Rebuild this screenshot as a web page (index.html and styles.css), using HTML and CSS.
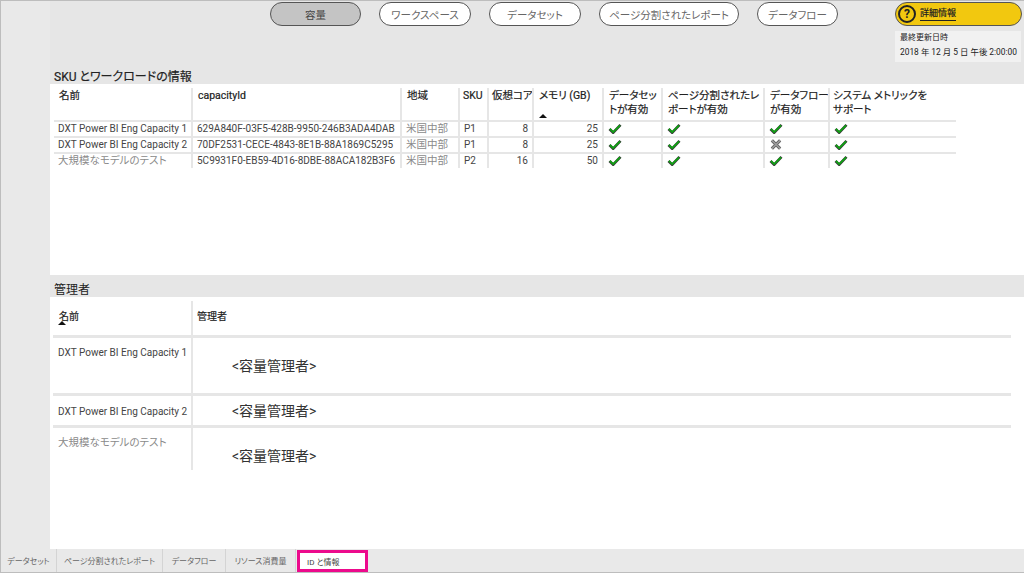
FILE: index.html
```html
<!DOCTYPE html>
<html lang="ja">
<head>
    <meta charset="UTF-8">
    <title>容量</title>
    <link rel="stylesheet" href="styles.css">
</head>
<body>
    <svg class="defs" width="0" height="0">
        <symbol id="check" viewBox="0 0 14 12">
            <path d="M1 6.5 L5 10.5 L13 2" fill="none" stroke="#3a3f3a" stroke-width="3"/>
            <path d="M1.5 6.5 L5 10 L12.5 2.5" fill="none" stroke="#0ea512" stroke-width="1.8"/>
        </symbol>
        <symbol id="cross" viewBox="0 0 12 12">
            <path d="M1.5 1.5 L10.5 10.5 M10.5 1.5 L1.5 10.5" fill="none" stroke="#5c5c5c" stroke-width="3.4"/>
            <path d="M1.5 1.5 L10.5 10.5 M10.5 1.5 L1.5 10.5" fill="none" stroke="#9a9a9a" stroke-width="1.8"/>
        </symbol>
    </svg>

    <div class="page">
        <div class="left-strip"></div>
        <div class="canvas">
            <header class="top">
                <nav class="nav">
                    <a class="pill active">容量</a>
                    <a class="pill w92">ワークスペース</a>
                    <a class="pill w92">データセット</a>
                    <a class="pill w140">ページ分割されたレポート</a>
                    <a class="pill w81">データフロー</a>
                    <div class="side">
                        <a class="more">
                            <span class="q">?</span>
                            <span class="more-label">詳細情報</span>
                        </a>
                        <div class="updated">
                            <div>最終更新日時</div>
                            <div class="updated-date">2018 年 12 月 5 日 午後 2:00:00</div>
                        </div>
                    </div>
                </nav>
                <h2 class="title">SKU とワークロードの情報</h2>
            </header>

            <section class="sku-panel">
                <div class="sku-table">
                    <div class="th">名前</div>
                    <div class="th">capacityId</div>
                    <div class="th">地域</div>
                    <div class="th tight">SKU</div>
                    <div class="th tight">仮想コア</div>
                    <div class="th">メモリ (GB)<i class="sort"></i></div>
                    <div class="th">データセッ<br>トが有効</div>
                    <div class="th">ページ分割されたレ<br>ポートが有効</div>
                    <div class="th">データフロー<br>が有効</div>
                    <div class="th tight last">システム メトリックを<br>サポート</div>

                    <div class="td">DXT Power BI Eng Capacity 1</div>
                    <div class="td">629A840F-03F5-428B-9950-246B3ADA4DAB</div>
                    <div class="td muted">米国中部</div>
                    <div class="td">P1</div>
                    <div class="td num">8</div>
                    <div class="td num">25</div>
                    <div class="td"><svg class="ic"><use href="#check"/></svg></div>
                    <div class="td"><svg class="ic"><use href="#check"/></svg></div>
                    <div class="td"><svg class="ic"><use href="#check"/></svg></div>
                    <div class="td last"><svg class="ic"><use href="#check"/></svg></div>

                    <div class="td">DXT Power BI Eng Capacity 2</div>
                    <div class="td">70DF2531-CECE-4843-8E1B-88A1869C5295</div>
                    <div class="td muted">米国中部</div>
                    <div class="td">P1</div>
                    <div class="td num">8</div>
                    <div class="td num">25</div>
                    <div class="td"><svg class="ic"><use href="#check"/></svg></div>
                    <div class="td"><svg class="ic"><use href="#check"/></svg></div>
                    <div class="td"><svg class="ic"><use href="#cross"/></svg></div>
                    <div class="td last"><svg class="ic"><use href="#check"/></svg></div>

                    <div class="td end muted">大規模なモデルのテスト</div>
                    <div class="td end">5C9931F0-EB59-4D16-8DBE-88ACA182B3F6</div>
                    <div class="td end muted">米国中部</div>
                    <div class="td end">P2</div>
                    <div class="td end num">16</div>
                    <div class="td end num">50</div>
                    <div class="td end"><svg class="ic"><use href="#check"/></svg></div>
                    <div class="td end"><svg class="ic"><use href="#check"/></svg></div>
                    <div class="td end"><svg class="ic"><use href="#check"/></svg></div>
                    <div class="td end last"><svg class="ic"><use href="#check"/></svg></div>
                </div>
            </section>

            <h2 class="band">管理者</h2>

            <section class="admin-panel">
                <div class="admin-table">
                    <div class="a-th a-name">名前<i class="sort"></i></div>
                    <div class="a-th a-right">管理者</div>

                    <div class="a-td row1">DXT Power BI Eng Capacity 1</div>
                    <div class="a-td a-right row1"><span class="admin">&lt;容量管理者&gt;</span></div>

                    <div class="a-td row2">DXT Power BI Eng Capacity 2</div>
                    <div class="a-td a-right row2"><span class="admin">&lt;容量管理者&gt;</span></div>

                    <div class="a-td row3 muted">大規模なモデルのテスト</div>
                    <div class="a-td a-right row3"><span class="admin">&lt;容量管理者&gt;</span></div>
                </div>
            </section>
        </div>
    </div>

    <footer class="tabs">
        <a class="tab">データセット</a>
        <a class="tab">ページ分割されたレポート</a>
        <a class="tab">データフロー</a>
        <a class="tab">リソース消費量</a>
        <a class="tab current">ID と情報</a>
    </footer>
</body>
</html>
```

FILE: styles.css
```css
* {
    box-sizing: border-box;
}
html, body {
    height: 100%;
}
body {
    margin: 0;
    display: flex;
    flex-direction: column;
    overflow: hidden;
    background: #fff;
    color: #333;
    font-family: Roboto, "Noto Sans CJK JP", sans-serif;
    font-size: 10px;
    font-feature-settings: "palt";
    border-top: 1px solid #bdbdbd;
    border-left: 1px solid #bdbdbd;
}
.defs {
    position: absolute;
}
.page {
    flex: 1;
    display: flex;
    min-height: 0;
}
.left-strip {
    width: 49px;
    background: #e9e9e9;
}
.canvas {
    flex: 1;
    display: flex;
    flex-direction: column;
}

/* header */
.top {
    height: 83px;
    background: #e6e6e6;
    display: flex;
    flex-direction: column;
    justify-content: space-between;
}
.nav {
    display: flex;
    align-items: flex-start;
    gap: 18px;
    padding-left: 220px;
    padding-top: 1px;
}
.pill {
    width: 91px;
    height: 24px;
    display: flex;
    align-items: center;
    justify-content: center;
    background: #fff;
    border: 1.5px solid #555;
    border-radius: 12px;
    color: #666;
    font-size: 10.5px;
}
.pill.active {
    background: #c4c4c4;
    color: #444;
}
.w92 {
    width: 92px;
}
.w140 {
    width: 140px;
}
.w81 {
    width: 81px;
}
.side {
    margin-left: 39px;
    width: 127px;
}
.more {
    height: 24px;
    display: flex;
    align-items: center;
    gap: 4px;
    padding-left: 2px;
    background: #f2c80f;
    border: 1.5px solid #555;
    border-radius: 12px;
    color: #222;
}
.q {
    width: 18px;
    height: 18px;
    border: 2px solid #222;
    border-radius: 50%;
    display: flex;
    align-items: center;
    justify-content: center;
    font-size: 12px;
    font-weight: 700;
}
.more-label {
    border-bottom: 1px solid #222;
    line-height: 13px;
    font-size: 9px;
    -webkit-text-stroke: 0.2px #222;
}
.updated {
    margin-top: 5px;
    height: 31px;
    width: 126px;
    background: #f1f1f1;
    padding-left: 5px;
    font-size: 8px;
    line-height: 13px;
    white-space: nowrap;
    color: #222;
}
.updated-date {
    margin-top: 2px;
    font-size: 8.4px;
}
.title {
    margin: 0 0 -1px 4px;
    font-size: 12px;
    font-weight: 400;
    line-height: 16px;
    color: #222;
    -webkit-text-stroke: 0.2px #222;
}

/* sku table */
.sku-panel {
    height: 191px;
    padding: 4px 0 0 4px;
}
.sku-table {
    display: grid;
    grid-template-columns: 139px 209px 58px 29px 45px 70px 59px 102px 65px 126px;
    grid-template-rows: 34px 16px 16px 14px;
}
.th, .td {
    border-right: 2px solid #e6e6e6;
}
.th {
    padding: 1px 0 0 5px;
    border-bottom: 2px solid #e6e6e6;
    font-size: 10.5px;
    line-height: 14px;
    white-space: nowrap;
    overflow: hidden;
    color: #222;
    position: relative;
    -webkit-text-stroke: 0.2px #222;
}
.th.tight {
    padding-left: 3px;
}
.td {
    padding: 0 4px;
    border-bottom: 2px solid #e6e6e6;
    font-size: 10px;
    line-height: 14px;
    white-space: nowrap;
    overflow: hidden;
    color: #444;
}
.td.end {
    border-bottom: none;
}
.th.last, .td.last {
    border-right: none;
}
.num {
    text-align: right;
}
.muted {
    color: #8a8a8a;
    font-size: 10.5px;
}
.ic {
    width: 14px;
    height: 11px;
    margin: 1px 0 0 0;
    display: block;
}
.sort {
    position: absolute;
    left: 5px;
    bottom: 2px;
    border-left: 4px solid transparent;
    border-right: 4px solid transparent;
    border-bottom: 4px solid #111;
}

/* admin table */
.band {
    margin: 0;
    height: 22px;
    padding-left: 4px;
    background: #e6e6e6;
    font-size: 12px;
    font-weight: 400;
    line-height: 31px;
    color: #222;
}
.admin-panel {
    flex: 1;
    padding: 4px 13px 0 3px;
}
.admin-table {
    display: grid;
    grid-template-columns: 138px 1fr;
    grid-template-rows: 37px 58px 32px 42px;
}
.a-th, .a-td {
    padding: 0 5px;
    border-bottom: 3px solid #e6e6e6;
    font-size: 10px;
    position: relative;
}
.a-th {
    line-height: 31px;
    color: #222;
    -webkit-text-stroke: 0.2px #222;
}
.a-name {
    padding-left: 6px;
}
.a-th .sort {
    bottom: 10px;
}
.a-td {
    line-height: 15px;
    color: #444;
    white-space: nowrap;
}
.a-td.muted {
    color: #8a8a8a;
    font-size: 10.5px;
}
.row1 {
    padding-top: 7px;
}
.row2 {
    padding-top: 8px;
}
.row3 {
    padding-top: 7px;
    border-bottom: none;
}
.a-right {
    border-left: 2px solid #e6e6e6;
    padding-left: 4px;
}
.a-td.a-right {
    padding-top: 6px;
}
.admin {
    display: block;
    margin-left: 35px;
    font-size: 14px;
    line-height: 18px;
    color: #333;
}
.row1 .admin {
    margin-top: 13px;
}
.row2 .admin {
    margin-top: 0;
}
.row3 .admin {
    margin-top: 13px;
}

/* bottom tabs */
.tabs {
    height: 24px;
    display: grid;
    grid-template-columns: 56px 106px 63px 70px 72px;
    background: #e9e9e9;
    border-bottom: 1px solid #bdbdbd;
}
.tab {
    display: flex;
    align-items: center;
    justify-content: center;
    border-right: 1px solid #d4d4d4;
    color: #666;
    font-size: 8px;
}
.tab.current {
    margin: 1px 0 0 1px;
    padding-left: 7px;
    justify-content: flex-start;
    background: #fff;
    border: 3px solid #ec0a8c;
    color: #444;
}
```
